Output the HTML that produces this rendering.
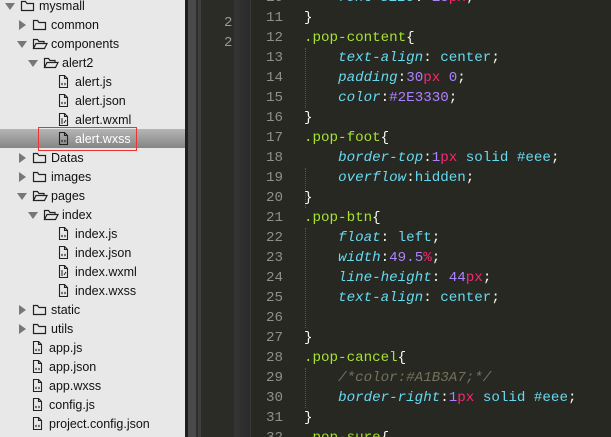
<!DOCTYPE html>
<html style="width:611px;height:437px;overflow:hidden"><head><meta charset="utf-8"><style>
*{margin:0;padding:0;box-sizing:border-box}
body{width:611px;height:437px;overflow:hidden;background:#272822;position:relative;font-family:"Liberation Sans",sans-serif}
#side{position:absolute;left:0;top:0;width:185px;height:437px;background:#e8e8e8}
.r{position:absolute;height:19px;line-height:19px;font-size:12.5px;color:#111;white-space:nowrap}
.sel{position:absolute;left:0;top:129px;width:185px;height:19px;background:linear-gradient(#b5b5b5,#858585)}
.box{position:absolute;left:38px;top:127px;width:99px;height:24px;border:1px solid #e33}
.ar{position:absolute;width:0;height:0}
.ar.o{border-left:5px solid transparent;border-right:5px solid transparent;border-top:7px solid #777}
.ar.c{border-top:5px solid transparent;border-bottom:5px solid transparent;border-left:7px solid #777}
svg{position:absolute}
.strip{position:absolute;top:0;height:437px}
#code{position:absolute;left:0;top:-12px;font-family:"Liberation Mono",monospace;font-size:14.2px;line-height:20px;white-space:pre}
.ln{position:absolute;left:240px;width:43px;text-align:right;color:#8f908a}
.cl{position:absolute;left:304px;color:#f8f8f2}
.g{color:#a6e22e}.p{color:#66d9ef;font-style:italic}.v{color:#66d9ef}.n{color:#ae81ff}.u{color:#f92672}.w{color:#f8f8f2}.cm{color:#75715e;font-style:italic}
.guide{position:absolute;left:305px;width:0;border-left:1px dotted #555}
</style></head><body>
<div id="side">
<div class="sel"></div>
</div>
<div class="strip" style="left:185px;width:3px;background:#1f1f1f"></div>
<div class="strip" style="left:188px;width:8px;background:#4a4a4a"></div>
<div class="strip" style="left:196px;width:2px;background:#2e2e2e"></div>
<div class="strip" style="left:198px;width:3px;background:#3f3f3f"></div>
<div class="strip" style="left:201px;width:33px;background:#2b2c26"></div>
<div class="strip" style="left:234px;width:16px;background:linear-gradient(90deg,#353535,#2a2a2a)"></div>
<div class="strip" style="left:250px;width:1px;background:#3a3a3a"></div>
<div style="position:absolute;left:224px;top:13px;font-family:'Liberation Mono',monospace;font-size:14px;line-height:20px;color:#9a9a95">2<br>2</div>
<div class="guide" style="top:48px;height:60px"></div>
<div class="guide" style="top:168px;height:40px"></div>
<div class="guide" style="top:228px;height:100px"></div>
<div class="guide" style="top:368px;height:40px"></div>
<div id="code">
<div class="ln" style="top:0">10</div><div class="cl" style="top:0">    <span class="p">font-size</span>: <span class="n">15</span><span class="u">px</span>;</div>
<div class="ln" style="top:20px">11</div><div class="cl" style="top:20px">}</div>
<div class="ln" style="top:40px">12</div><div class="cl" style="top:40px"><span class="g">.pop-content</span>{</div>
<div class="ln" style="top:60px">13</div><div class="cl" style="top:60px">    <span class="p">text-align</span>: <span class="v">center</span>;</div>
<div class="ln" style="top:80px">14</div><div class="cl" style="top:80px">    <span class="p">padding</span>:<span class="n">30</span><span class="u">px</span> <span class="n">0</span>;</div>
<div class="ln" style="top:100px">15</div><div class="cl" style="top:100px">    <span class="p">color</span>:<span class="n">#2E3330</span>;</div>
<div class="ln" style="top:120px">16</div><div class="cl" style="top:120px">}</div>
<div class="ln" style="top:140px">17</div><div class="cl" style="top:140px"><span class="g">.pop-foot</span>{</div>
<div class="ln" style="top:160px">18</div><div class="cl" style="top:160px">    <span class="p">border-top</span>:<span class="n">1</span><span class="u">px</span> <span class="v">solid</span> <span class="v">#eee</span>;</div>
<div class="ln" style="top:180px">19</div><div class="cl" style="top:180px">    <span class="p">overflow</span>:<span class="v">hidden</span>;</div>
<div class="ln" style="top:200px">20</div><div class="cl" style="top:200px">}</div>
<div class="ln" style="top:220px">21</div><div class="cl" style="top:220px"><span class="g">.pop-btn</span>{</div>
<div class="ln" style="top:240px">22</div><div class="cl" style="top:240px">    <span class="p">float</span>: <span class="v">left</span>;</div>
<div class="ln" style="top:260px">23</div><div class="cl" style="top:260px">    <span class="p">width</span>:<span class="n">49.5</span><span class="u">%</span>;</div>
<div class="ln" style="top:280px">24</div><div class="cl" style="top:280px">    <span class="p">line-height</span>: <span class="n">44</span><span class="u">px</span>;</div>
<div class="ln" style="top:300px">25</div><div class="cl" style="top:300px">    <span class="p">text-align</span>: <span class="v">center</span>;</div>
<div class="ln" style="top:320px">26</div><div class="cl" style="top:320px"></div>
<div class="ln" style="top:340px">27</div><div class="cl" style="top:340px">}</div>
<div class="ln" style="top:360px">28</div><div class="cl" style="top:360px"><span class="g">.pop-cancel</span>{</div>
<div class="ln" style="top:380px">29</div><div class="cl" style="top:380px">    <span class="cm">/*color:#A1B3A7;*/</span></div>
<div class="ln" style="top:400px">30</div><div class="cl" style="top:400px">    <span class="p">border-right</span>:<span class="n">1</span><span class="u">px</span> <span class="v">solid</span> <span class="v">#eee</span>;</div>
<div class="ln" style="top:420px">31</div><div class="cl" style="top:420px">}</div>
<div class="ln" style="top:440px">32</div><div class="cl" style="top:440px"><span class="g">.pop-sure</span>{</div>
</div>
<script>
var rows=[
[0,6,'o','f','mysmall'],[1,25,'c','f','common'],[1,44,'o','fo','components'],[2,63,'o','fo','alert2'],
[3,82,'','d','alert.js'],[3,101,'','d','alert.json'],[3,120,'','x','alert.wxml'],[3,139,'','d','alert.wxss'],
[1,158,'c','f','Datas'],[1,177,'c','f','images'],[1,196,'o','fo','pages'],[2,215,'o','fo','index'],
[3,234,'','d','index.js'],[3,253,'','d','index.json'],[3,272,'','x','index.wxml'],[3,291,'','d','index.wxss'],
[1,310,'c','f','static'],[1,329,'c','f','utils'],[1,348,'','d','app.js'],[1,367,'','d','app.json'],
[1,386,'','d','app.wxss'],[1,405,'','d','config.js'],[1,424,'','d','project.config.json']];
var h='';
rows.forEach(function(r){
 var lv=r[0],cy=r[1];
 var ax=5+[0,12,23,35][lv];
 var fx=ax+15, tx=fx+19, top=cy-9;
 if(r[3]=='d'||r[3]=='x'){fx=[0,32,0,58][lv];tx=fx+17;}
 var white=(r[4]=='alert.wxss');
 if(r[2]=='o')h+='<div class="ar o" style="left:'+ax+'px;top:'+(cy-3)+'px"></div>';
 if(r[2]=='c')h+='<div class="ar c" style="left:'+(ax+2)+'px;top:'+(cy-5)+'px"></div>';
 if(r[3]=='f')h+='<svg style="left:'+fx+'px;top:'+(cy-6)+'px" width="15" height="12"><path d="M1.5 1.5h4l1.5 2h6.5v7h-12z" fill="none" stroke="#222" stroke-width="1.2"/></svg>';
 if(r[3]=='fo')h+='<svg style="left:'+fx+'px;top:'+(cy-6)+'px" width="16" height="12"><path d="M1.5 10.5v-9h4l1.5 2h5v2M1.5 10.5l2.5-5h11l-2.5 5z" fill="none" stroke="#222" stroke-width="1.2"/></svg>';
 if(r[3]=='d'||r[3]=='x')h+='<svg style="left:'+fx+'px;top:'+(cy-7)+'px" width="11" height="14"><path d="M1.5 .5h5l3 3v9h-8z M6.5 .5v3h3" fill="none" stroke="#222" stroke-width="1.1"/>'+(r[3]=='d'?'<path d="M3.5 9l1 -1M3.5 9l1 1M7.5 9l-1-1M7.5 9l-1 1" stroke="#222" stroke-width="1"/>':'<path d="M3 6h2M3 8h2M3 10h2M6 10l2-3" stroke="#222" stroke-width="1"/>')+'</svg>';
 h+='<div class="r" style="left:'+tx+'px;top:'+top+'px;'+(white?'color:#fff':'')+'">'+r[4]+'</div>';
});
h+='<div class="box"></div>';
document.getElementById('side').insertAdjacentHTML('beforeend',h);
</script>
</body></html>
